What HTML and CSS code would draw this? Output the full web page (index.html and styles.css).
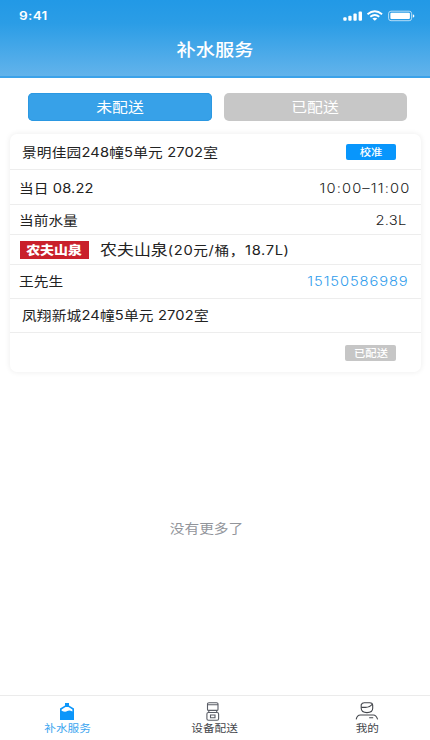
FILE: index.html
```html
<!DOCTYPE html>
<html lang="zh-CN">
<head>
<meta charset="utf-8">
<title>补水服务</title>
<link rel="stylesheet" href="styles.css">
</head>
<body>
<div class="app">
  <header class="header">
    <div class="status">
      <span class="wide left clock">9:41</span>
      <svg class="signals" width="72" height="14" viewBox="0 0 72 14" fill="#fff">
        <rect x="0.3" y="8.3" width="3.3" height="3.5" rx="1"/>
        <rect x="5.3" y="6.7" width="3.3" height="5.1" rx="1"/>
        <rect x="10.4" y="4.6" width="3.3" height="7.2" rx="1"/>
        <rect x="15.6" y="2.6" width="3.4" height="9.2" rx="1"/>
        <g fill="none" stroke="#fff" stroke-width="1.8">
          <path d="M24.5 5.3Q31.8 -.8 39.1 5.3"/>
          <path d="M27.3 7.8Q31.8 4.3 36.3 7.8"/>
        </g>
        <path d="M29.3 9.5Q31.8 7.8 34.3 9.5L31.8 11.7Z"/>
        <rect x="45.6" y="2.2" width="23" height="9.5" rx="2.4" fill="none" stroke="#fff" stroke-opacity=".65"/>
        <rect x="47.4" y="3.8" width="19.5" height="6.2" rx="1"/>
        <path d="M69.8 5.2Q71.4 5.6 71.4 7T69.8 8.7Z"/>
      </svg>
    </div>
    <h1 class="title"><span class="wide">补水服务</span></h1>
  </header>

  <div class="tabs">
    <div class="tab active"><span class="wide">未配送</span></div>
    <div class="tab"><span class="wide">已配送</span></div>
  </div>

  <main class="card">
    <div class="row r-address"><span class="wide left inset">景明佳园248幢5单元 2702室</span><span class="chip blue"><span class="wide">校准</span></span></div>
    <div class="row r-date"><span class="wide left">当日 08.22</span><span class="wide right time">10:00–11:00</span></div>
    <div class="row r-level"><span class="wide left">当前水量</span><span class="wide right volume">2.3L</span></div>
    <div class="row r-brand"><span class="brand"><span class="wide">农夫山泉</span></span><span class="wide left product">农夫山泉<span class="spec">(20元/桶，18.7L)</span></span></div>
    <div class="row r-person"><span class="wide left">王先生</span><span class="wide right phone">15150586989</span></div>
    <div class="row r-dest"><span class="wide left inset">凤翔新城24幢5单元 2702室</span></div>
    <div class="row r-state"><span class="chip gray"><span class="wide">已配送</span></span></div>
  </main>

  <div class="end"><span class="wide">没有更多了</span></div>

  <nav class="nav">
    <div class="item current">
      <svg width="22" height="20" viewBox="0 0 22 20">
        <path d="M8 1h4v2.4l5 3V18H3V6.4l5-3z" fill="#0c96fa"/>
        <path d="M4.6 7.5L8.5 5h3l3.9 2.5v2Q12.3 7.6 10.3 9T4.6 8.8z" fill="#fff"/>
      </svg>
      <span class="wide">补水服务</span>
    </div>
    <div class="item middle">
      <svg width="22" height="20" viewBox="0 0 22 20" fill="none" stroke="#5a5d66" stroke-width="1.1">
        <path d="M3.5 1.8Q3.5.7 5 .7h7.5q1.5 0 1.5 1.1v5.6q0 1-1.2 1H4.700q-1.200 0-1.200-1zM3.500 2.700h10.500M4.800 8.500v2M12.700 8.500v2"/>
        <rect x="2.900" y="10.500" width="11.700" height="7.800" rx="1.500"/>
        <path d="M6.500 13h4.500v2.800h-4.500z"/>
      </svg>
      <span class="wide">设备配送</span>
    </div>
    <div class="item mine">
      <svg width="24" height="20" viewBox="0 0 24 20" fill="none" stroke="#44474d" stroke-width="1.1">
        <path d="M6.200 2.800Q7 .7 9.300.7h5.400q3 0 3 2.800v2.800q0 4.300-5.700 4.300T6.200 6.300z"/>
        <path d="M6.300 5.400h4.200q4.500-.1 7-3.400"/>
        <path d="M1.200 17.300q.8-4.300 4.300-4.300h12.800q3 0 4.300 4.300M14.200 15.800h4"/>
      </svg>
      <span class="wide">我的</span>
    </div>
  </nav>
</div>
</body>
</html>
```
FILE: styles.css
```css
* { box-sizing: border-box; }
body {
  margin: 0;
  font-family: Inter, "Noto Sans CJK SC", sans-serif;
  font-size: 13px;
  line-height: 1;
  color: #222;
  background: #fff;
}
.app {
  display: flex;
  flex-direction: column;
  width: 430px;
  height: 740px;
}
/* Wide lettering used across the interface */
.wide {
  display: inline-block;
  white-space: nowrap;
  line-height: 20px;
  transform: scaleX(1.13);
}
.left { transform-origin: left center; }
.right { transform-origin: right center; }

.header {
  height: 78px;
  color: #fff;
  background: linear-gradient(#2299e6 0, #2b9de6 30%, #62b3eb 97%, #3ca2e9 98%);
}
.status {
  display: flex;
  justify-content: space-between;
  align-items: center;
  height: 32px;
  padding: 0 15px 0 19px;
}
.clock { font-size: 12px; font-weight: 600; letter-spacing: .3px; }
.title {
  margin: 8px 0 0;
  text-align: center;
  font-size: 17px;
  font-weight: 500;
}

.tabs {
  display: flex;
  gap: 12px;
  padding: 15px 23px 0 28px;
}
.tab {
  display: flex;
  align-items: center;
  justify-content: center;
  flex: 1;
  height: 28px;
  border-radius: 5px;
  font-size: 14px;
  color: #fff;
  background: #c7c7c7;
}
.tab.active {
  background: #37a1e8;
  box-shadow: inset 0 0 0 1px #2b98e2;
}

.card {
  margin: 13px 9px 0 10px;
  border-radius: 7px;
  background: #fff;
  box-shadow: 0 0 5px 1px rgba(0, 0, 0, .06);
}
.row {
  display: flex;
  align-items: center;
  justify-content: space-between;
  padding: 0 12px 0 10px;
  border-bottom: 1px solid #ededed;
}
.row .left { margin-left: -1px; }
.row .inset { margin-left: 2px; letter-spacing: .15px; }
.r-address { height: 36px; }
.r-date { height: 35px; padding-top: 1px; }
.r-level { height: 30px; }
.r-brand { height: 30px; justify-content: flex-start; }
.r-person { height: 34px; padding-bottom: 1px; }
.r-dest { height: 34px; padding-bottom: 1px; }
.r-state { height: 39px; justify-content: flex-end; border-bottom: 0; }
.r-date .left { letter-spacing: .1px; }
.volume { margin-right: 2px; letter-spacing: .3px; font-weight: 300; }
.time { letter-spacing: 1px; margin-right: -1px; font-weight: 300; }
.phone { color: #2f9cec; letter-spacing: .8px; font-weight: 300; }
.chip {
  display: flex;
  align-items: center;
  justify-content: center;
  height: 16px;
  border-radius: 2px;
  color: #fff;
  font-size: 10px;
  margin-right: 13px;
}
.chip.blue { width: 50px; background: #0896fc; font-weight: 500; }
.chip.gray { width: 51px; background: #c6c6c6; font-weight: 500; }
.brand {
  display: flex;
  align-items: center;
  justify-content: center;
  width: 69px;
  height: 18px;
  margin-right: 12px;
  padding-top: 2px;
  color: #fff;
  background: #c9202b;
  font-size: 12px;
  font-weight: 900;
}
.brand .wide { transform: scaleX(1.16); }
.product { font-size: 15px; }
.spec { font-size: 13px; letter-spacing: .55px; }

.end {
  margin-top: 146px;
  text-align: center;
  color: #92959b;
  padding-right: 17px;
}

.nav {
  display: flex;
  justify-content: space-between;
  height: 45px;
  margin-top: auto;
  padding: 6px 38px 0 43px;
  border-top: 1px solid #ebebeb;
  font-size: 10.3px;
  color: #44464b;
}
.item {
  display: flex;
  flex-direction: column;
  align-items: center;
  width: 50px;
}
.middle { margin-right: 5px; }
.item .wide { line-height: 13px; }
.current { color: #3ba5ef; }
```
